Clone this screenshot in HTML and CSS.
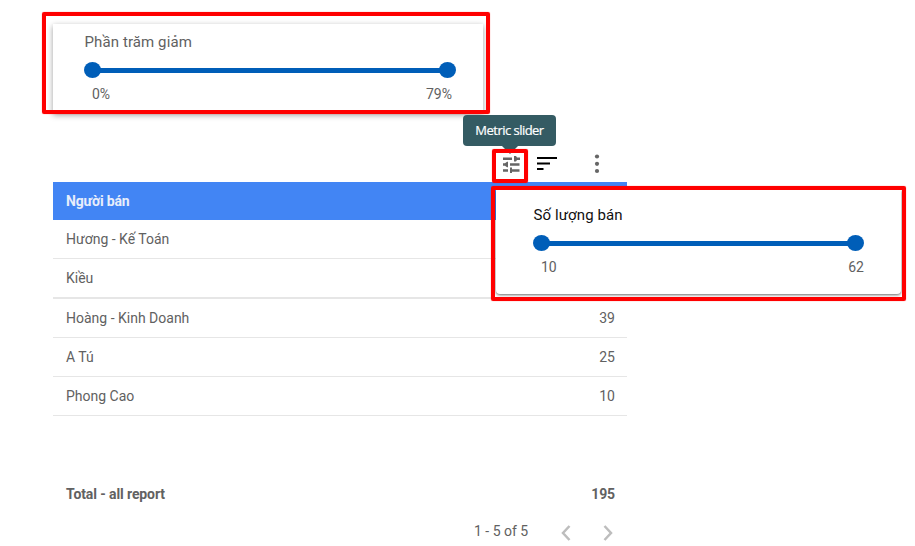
FILE: index.html
```html
<!DOCTYPE html>
<html lang="vi">
<head>
<meta charset="utf-8">
<title>Report</title>
<link rel="stylesheet" href="styles.css">
</head>
<body>
<main class="report">
  <section class="filter-card callout">
    <div class="card filter">
      <div class="card-title">Phần trăm giảm</div>
      <div class="slider"><span class="knob"></span><span class="knob"></span></div>
      <div class="range"><span>0%</span><span>79%</span></div>
    </div>
  </section>

  <div class="toolbar">
    <div class="tool-wrap callout">
      <svg class="tune" viewBox="0 0 17 17" width="17" height="17"><path d="M0 1.500h9v2.500H0zM11 0h2l1 1.500h3V4h-3l-1 1.500h-2zM0 7.300h2L4 5.800h1v5.400H4L2 9.800H0zM7 7.300h9.500v2.500H7zM0 13.200h5v2.500H0zM7 11.500h2v1.700h7.500v2.500H9V17H7z"/></svg>
    </div>
    <div class="tooltip">Metric slider</div>
    <svg class="sort" viewBox="0 0 20 14" width="20" height="14"><path d="M0 0h20v2H0zM0 5.500h13v2H0zM0 11h6.500v2H0z"/></svg>
    <svg class="more" viewBox="0 0 6 20" width="6" height="20"><circle cx="3" cy="2.500" r="2.100"/><circle cx="3" cy="9.800" r="2.100"/><circle cx="3" cy="17" r="2.100"/></svg>
  </div>

  <div class="table-wrap">
    <div class="row head"><span>Người bán</span></div>
    <div class="row"><span>Hương - Kế Toán</span></div>
    <div class="row thick"><span>Kiều</span></div>
    <div class="row"><span>Hoàng - Kinh Doanh</span><span>39</span></div>
    <div class="row"><span>A Tú</span><span>25</span></div>
    <div class="row"><span>Phong Cao</span><span>10</span></div>
    <div class="row total"><span>Total - all report</span><span>195</span></div>
    <div class="pager">
      <span>1 - 5 of 5</span>
      <svg class="prev" viewBox="0 0 10 16" width="10" height="16"><path d="M8.500 1L2 8l6.500 7"/></svg>
      <svg class="next" viewBox="0 0 10 16" width="10" height="16"><path d="M1.500 1L8 8l-6.500 7"/></svg>
    </div>
    <section class="popup callout">
      <div class="card metric">
        <div class="card-title">Số lượng bán</div>
        <div class="slider"><span class="knob"></span><span class="knob"></span></div>
        <div class="range"><span>10</span><span>62</span></div>
      </div>
    </section>
  </div>
</main>
</body>
</html>
```
FILE: styles.css
```css
* { box-sizing: border-box; }
body {
  margin: 0;
  height: 546px;
  overflow: hidden;
  background: #fff;
  color: #616161;
  font: 14px/20px Roboto, sans-serif;
}
.report { padding: 12px 0 0 42px; }
.callout { position: relative; }
.callout::after {
  content: "";
  position: absolute;
  inset: 0;
  border: 4px solid #f00;
  border-radius: 2px;
  box-shadow: 0 0 1px rgba(255, 0, 0, .7);
}
.filter-card { width: 448px; height: 102px; margin-bottom: 1px; padding: 12px 7px 0 11px; }
.card { background: #fff; }
.filter {
  height: 89px;
  padding: 8px 27px 0 31px;
  box-shadow: 0 2px 6px rgba(0, 0, 0, .38);
}
.card-title { font-size: 15px; line-height: 20px; letter-spacing: .1px; text-indent: .5px; }
.slider {
  display: flex;
  justify-content: space-between;
  align-items: center;
  height: 16px;
  background: linear-gradient(#005eb8, #005eb8) center 6px / calc(100% - 16px) 5px no-repeat;
}
.filter .slider { margin-top: 10px; }
.knob { width: 17px; height: 16px; border-radius: 50%; background: #005eb8; }
.range { display: flex; justify-content: space-between; margin-top: 6px; padding: 0 4px 0 8px; }
.toolbar {
  position: relative;
  display: flex;
  height: 67px;
  padding: 34px 0 0 450px;
}
.tool-wrap { width: 36px; height: 34px; padding: 7px 0 0 11px; z-index: 2; }
.tool-wrap svg { display: block; }
.tune, .more { fill: #666; }
.tooltip {
  position: absolute;
  left: 421px;
  top: 0;
  width: 93px;
  height: 31px;
  border-radius: 4px;
  background: #345b63;
  color: #fff;
  font: 13px/31px "Open Sans", sans-serif;
  letter-spacing: -.53px;
  text-align: center;
  -webkit-text-stroke: .2px #fff;
}
.tooltip::after {
  content: "";
  position: absolute;
  left: 39px;
  top: 31px;
  border: 8px solid transparent;
  border-top-color: #345b63;
  border-bottom: 0;
}
.sort { margin: 8px 0 0 9px; }
.more { margin: 5px 0 0 37px; }
.table-wrap { position: relative; width: 574px; margin-left: 11px; }
.row {
  display: flex;
  justify-content: space-between;
  height: 39px;
  padding: 0 12px 0 13px;
  border-bottom: 1px solid #e6e6e6;
  line-height: 39px;
}
.row.head { height: 38px; border: 0; background: #4285f4; color: #e8eefb; font-weight: 700; letter-spacing: -.15px; }
.row.thick { height: 40px; border-bottom-width: 2px; }
.row.total { height: 39px; margin-top: 59px; border: 0; font-weight: 700; letter-spacing: -.1px; }
.pager { display: flex; align-items: center; padding: 7px 0 0 421px; white-space: nowrap; }
.pager svg { flex: none; fill: none; stroke: #bdbdbd; stroke-width: 2.500; margin-top: 4px; }
.prev { margin-left: 33px; }
.next { margin-left: 32px; }
.popup { position: absolute; left: 438px; top: 4px; width: 415px; height: 115px; padding: 4px 5px 0; }
.metric {
  height: 104px;
  padding: 15px 37px 0;
  border-radius: 0 0 4px 4px;
  box-shadow: 0 1px 3px rgba(0, 0, 0, .6);
}
.metric .card-title { color: #111; }
.metric .slider { margin-top: 10px; }
.metric .range { padding-right: 0; }
```
